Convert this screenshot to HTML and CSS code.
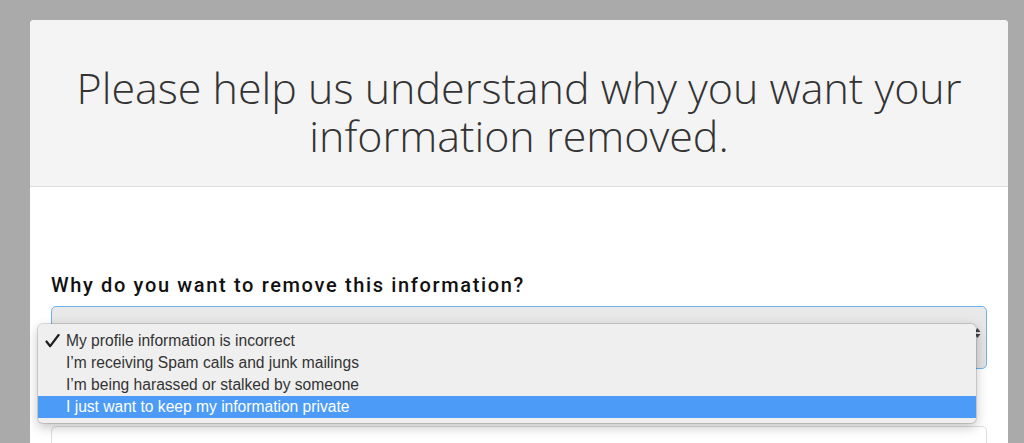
FILE: index.html
```html
<!DOCTYPE html>
<html>
<head>
<meta charset="utf-8">
<link rel="stylesheet" href="styles.css">
</head>
<body>
<div class="card">
  <div class="card-head">
    <h1 class="title">Please help us understand why you want your information removed.</h1>
  </div>
  <div class="card-body">
    <label class="label">Why do you want to remove this information?</label>
    <div class="select-wrap">
      <div class="select">
        <span class="arrows">
          <svg width="7" height="12" viewBox="0 0 7 12"><path d="M3.5 1 L6.5 5 H0.5 Z M3.5 11 L6.5 7 H0.5 Z" fill="#444"/></svg>
        </span>
      </div>
      <ul class="menu">
        <li class="opt checked"><svg class="check" width="15" height="14" viewBox="0 0 15 14"><path d="M1.5 7.5 L5.2 12.2 L13.6 1" fill="none" stroke="#1e1e1e" stroke-width="2.2" stroke-linecap="round" stroke-linejoin="round"/></svg>My profile information is incorrect</li>
        <li class="opt">I’m receiving Spam calls and junk mailings</li>
        <li class="opt">I’m being harassed or stalked by someone</li>
        <li class="opt active">I just want to keep my information private</li>
      </ul>
    </div>
    <div class="input"></div>
  </div>
</div>
</body>
</html>
```
FILE: styles.css
```css
html, body {
  margin: 0;
  padding: 0;
  background: #aaaaaa;
  height: 443px;
  overflow: hidden;
}
body {
  padding: 20px 16px 0 30px;
  box-sizing: border-box;
}
.card {
  width: 978px;
  background: #ffffff;
  border-radius: 4px 4px 0 0;
  overflow: hidden;
}
.card-head {
  background: #f4f4f4;
  border-bottom: 1px solid #dddddd;
  height: 167px;
  box-sizing: border-box;
  display: flex;
  flex-direction: column;
  align-items: center;
}
.title {
  margin: 44px 0 0;
  padding: 0;
  font-family: "Open Sans", sans-serif;
  font-weight: 300;
  font-size: 43px;
  line-height: 48px;
  color: #333333;
  text-align: center;
}
.card-body {
  padding: 86px 21px 0 21px;
}
.label {
  display: block;
  font-family: Roboto, sans-serif;
  font-weight: 500;
  font-size: 20px;
  letter-spacing: 1.65px;
  line-height: 24px;
  color: #111111;
  margin-bottom: 9px;
}
.select-wrap {
  position: relative;
}
.select {
  height: 61px;
  border: 1px solid #6cb2f2;
  border-radius: 5px;
  background: linear-gradient(#e9e9e9, #e2e2e2);
  display: flex;
  justify-content: flex-end;
  align-items: flex-start;
}
.arrows {
  padding: 20px 5px 0 0;
  display: flex;
}
.menu {
  position: absolute;
  left: -13px;
  top: 18px;
  width: 938px;
  margin: 0;
  padding: 6px 0 5px;
  list-style: none;
  background: #efefef;
  border-radius: 5px;
  box-shadow: 0 0 0 1px rgba(0,0,0,0.12), 0 4px 12px rgba(0,0,0,0.25);
  font-family: "Liberation Sans", Arial, sans-serif;
  font-size: 15.6px;
  color: #333333;
}
.opt {
  height: 22px;
  line-height: 22px;
  padding-left: 28px;
  position: relative;
}
.check {
  position: absolute;
  left: 7px;
  top: 4px;
}
.opt.active {
  background: #4c9bf7;
  color: #ffffff;
}
.input {
  margin-top: 57px;
  height: 40px;
  border: 1px solid #dddddd;
  border-radius: 5px;
  background: #ffffff;
}
```
